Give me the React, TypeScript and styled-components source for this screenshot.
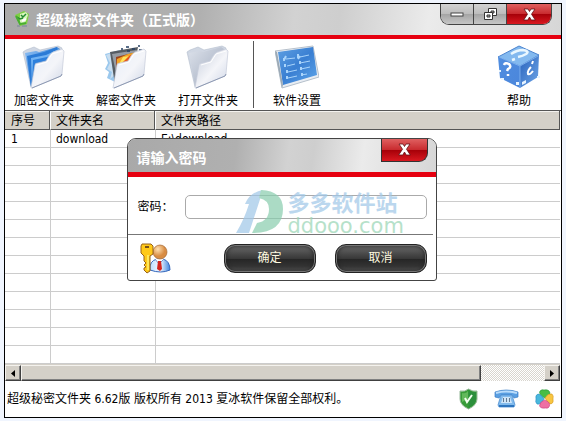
import React, { useState } from 'react';
import styled, { createGlobalStyle, css } from 'styled-components';

const Global = createGlobalStyle`
  * { box-sizing: border-box; }
  html, body { margin: 0; padding: 0; background: #f0f5fe; }
  body, button, input {
    font-family: "DejaVu Sans Condensed", "Noto Sans CJK SC", sans-serif;
    font-size: 12px;
    line-height: 16px;
    color: #000;
  }
  button { padding: 0; margin: 0; border: 0; background: none; }
`;

const Desktop = styled.div`
  display: flex;
  min-height: 100vh;
  padding: 3px 4px;
`;

const Window = styled.main`
  position: relative;
  flex: 1;
  min-width: 0;
  display: flex;
  flex-direction: column;
  border: 1px solid #000;
  background: #fff;
`;

const silver = css`
  background: linear-gradient(97deg, #a9a9a9 0%, #b0b0b0 35%, #d2d2d2 52%, #cecece 60%, #ebebeb 76%, #d6d6d6 100%);
`;

const TitleBar = styled.header`
  ${silver}
  display: flex;
  align-items: flex-start;
  height: 35px;
  padding: 0 9px 0 10px;
  border-bottom: 4px solid #e60010;
`;

const Title = styled.h1`
  flex: 1;
  margin: 0;
  padding: 6px 0 0 6px;
  font-size: 14px;
  line-height: 20px;
  font-weight: 700;
  color: #fff;
  white-space: nowrap;
`;

const AppMark = styled.svg`
  width: 15px;
  height: 16px;
  margin-top: 7px;
`;

const Controls = styled.div`
  display: flex;
  height: 21px;
  border: 1px solid #444;
  border-top: 0;
  border-radius: 0 0 9px 9px;
  overflow: hidden;
`;

const ControlButton = styled.button<{ $close?: boolean }>`
  display: flex;
  align-items: center;
  justify-content: center;
  width: ${(p) => (p.$close ? 44 : 33)}px;
  border-right: ${(p) => (p.$close ? '0' : '1px solid #444')};
  background: ${(p) =>
    p.$close
      ? 'linear-gradient(#df6060 0, #c92c30 48%, #a50008 50%, #d91820 100%)'
      : 'linear-gradient(#d2d2d2 0, #bdbdbd 48%, #a4a4a4 50%, #c6c6c6 100%)'};
`;

const Toolbar = styled.nav`
  display: flex;
  height: 72px;
  padding: 2px 28px 0 8px;
  border-bottom: 1px solid #555;
`;

const Tool = styled.button`
  display: flex;
  flex-direction: column;
  align-items: center;
  width: 62px;
  margin-right: 20px;
  padding-top: 4px;
  white-space: nowrap;

  svg { width: 44px; height: 44px; }
  span { margin-top: 4px; }
`;

const HelpTool = styled(Tool)`
  width: 48px;
  margin: 0 -10px 0 auto;
`;

const Divider = styled.div`
  width: 1px;
  height: 67px;
  margin: 0 12px 0 -6px;
  background: #555;
`;

const ListArea = styled.section`
  flex: 1 0 234px;
  overflow: hidden;
  padding-right: 1px;
`;

const FileTable = styled.table`
  width: 100%;
  table-layout: fixed;
  border-collapse: separate;
  border-spacing: 0;

  th {
    height: 19px;
    padding: 2px 5px 0;
    text-align: left;
    font-weight: 400;
    background: #d4d0c8;
    border-bottom: 1px solid #555;
    border-right: 1px solid #fff;
    box-shadow: inset -1px 0 #555, inset 0 1px #f4f2ee;
  }
  td {
    height: 18px;
    padding: 1px 5px 0;
    line-height: 16px;
    border-bottom: 1px solid #ccc;
    border-right: 1px solid #ccc;
  }
  th:last-child, td:last-child { border-right: 0; }
  th:first-child, td:first-child { padding-left: 6px; }
`;

const ScrollBar = styled.div`
  display: flex;
  height: 17px;
  margin-right: 1px;
  border-top: 1px solid #d4d0c8;
  background: repeating-conic-gradient(#d8d5ce 0 25%, #fff 0 50%) 0 0 / 2px 2px;
`;

const raised = css`
  background: #d4d0c8;
  border: 1px solid;
  border-color: #f4f2ee #404040 #404040 #f4f2ee;
  box-shadow: inset -1px -1px #808080;
`;

const ScrollButton = styled.button`
  ${raised}
  display: flex;
  align-items: center;
  justify-content: center;
  width: 16px;
`;

const ScrollTrack = styled.div`
  flex: 1;
  display: flex;
`;

const ScrollThumb = styled.div`
  ${raised}
  width: 88%;
`;

const StatusBar = styled.footer`
  display: flex;
  align-items: center;
  justify-content: space-between;
  height: 36px;
  padding: 0 7px 0 2px;
  white-space: nowrap;
`;

const StatusIcons = styled.div`
  display: flex;
  align-items: center;
  gap: 16px;
  svg { display: block; }
`;

const Overlay = styled.div`
  position: absolute;
  inset: 0 3px 3px 0;
  display: flex;
  align-items: center;
  justify-content: center;
`;

const Dialog = styled.form`
  position: relative;
  width: 310px;
  border: 1px solid #444;
  border-radius: 9px 9px 3px 3px;
  background: #fff;
  overflow: hidden;
`;

const DialogHeader = styled.header`
  ${silver}
  display: flex;
  height: 38px;
  padding: 0 8px 0 9px;
  border-bottom: 5px solid #e60010;
`;

const DialogTitle = styled.h2`
  flex: 1;
  margin: 0;
  padding-top: 9px;
  font-size: 14px;
  line-height: 20px;
  font-weight: 700;
  color: #fff;
`;

const DialogClose = styled(ControlButton)`
  width: 47px;
  height: 23px;
  border: 1px solid #333;
  border-top: 0;
  border-radius: 0 0 9px 0;
`;

const Field = styled.div`
  display: flex;
  align-items: center;
  height: 58px;
  margin: 0 3px 0 0;
  padding: 3px 6px 0 10px;
  border-bottom: 1px solid #777;

  label { width: 47px; white-space: nowrap; }
`;

const PasswordInput = styled.input`
  flex: 1;
  min-width: 0;
  height: 24px;
  padding: 0 6px;
  border: 1px solid #aaa;
  border-radius: 5px;
  background: #fff;
  outline: none;
`;

const Actions = styled.div`
  display: flex;
  align-items: center;
  height: 45px;
  padding: 2px 9px 0 12px;
  gap: 19px;

  svg { margin-right: auto; }
`;

const PillButton = styled.button`
  width: 92px;
  height: 29px;
  border: 1px solid #222;
  border-radius: 11px;
  color: #fffbe0;
  background: linear-gradient(#707070 0, #4c4c4c 30%, #383838 50%, #262626 53%, #333 78%, #5a5a5a 100%);
  box-shadow: inset 0 0 0 1px #777, inset 0 0 4px 1px #222;
`;

const Watermark = styled.div`
  position: absolute;
  left: 108px;
  top: 50px;
  display: flex;
  gap: 4px;
  opacity: 0.72;
  pointer-events: none;
  white-space: nowrap;
`;

const WatermarkText = styled.div`
  display: flex;
  flex-direction: column;

  strong {
    font: 700 22px/24px "Noto Sans CJK SC", sans-serif;
    color: #a2c8e8;
  }
  span {
    font: 21px/24px "DejaVu Sans", sans-serif;
    margin-top: 1px;
    color: #9bd6b6;
  }
`;

const CloseGlyph = () => (
  <svg width="13" height="13" viewBox="0 0 13 13">
    <path d="M1 1h4l1.500 2.500L8 1h4L8.500 6.200 12.300 12H8.200L6.500 9 4.800 12H.7l3.800-5.800z" fill="#fff" stroke="#641014" strokeWidth=".8" />
  </svg>
);

const AppIcon = () => (
  <AppMark viewBox="0 0 15 16" aria-hidden="true">
    <path d="M0 4 9 0l5 3-2 10-7 2z" fill="#7ed044" />
    <path d="m5 3 6-2 2 3-3 8-5 1z" fill="#d9f6bd" />
    <path d="m6 4 2 2 3-3M2 6l3 2 3-1" stroke="#238b31" strokeWidth="1.500" fill="none" />
    <path d="m1 5 4 8 6-1" stroke="#49ae31" strokeWidth="2" fill="none" />
    <path d="M2 15h3m2 0h5" stroke="#789" />
    <path d="m7 10 4-2" stroke="#fff" strokeWidth="2" />
  </AppMark>
);

const Folder = ({ kind }: { kind: 'blue' | 'photo' | 'gray' }) => {
  const id = `folder-${kind}`;
  const blue = kind === 'blue';
  return (
    <svg viewBox="0 0 44 44" aria-hidden="true">
      <defs>
        <linearGradient id={`${id}-front`} x1="0" y1="0" x2="1" y2="1">
          <stop offset="0" stopColor={kind === 'gray' ? '#c3cbda' : '#e6edf9'} />
          <stop offset=".55" stopColor="#f4f5f9" />
          <stop offset="1" stopColor="#ccd4e5" />
        </linearGradient>
        <linearGradient id={`${id}-back`} x1="0" y1="0" x2="1" y2="1">
          <stop offset="0" stopColor={blue ? '#8dc0f5' : '#dde2eb'} />
          <stop offset="1" stopColor={blue ? '#1765c3' : '#9ba6ba'} />
        </linearGradient>
      </defs>
      {kind !== 'photo' && (
        <>
          <path d="M1 7 4 5l8-3 6 3 18-4 4 2-1 9-30 30z" fill="#d0d7e3" stroke="#b4bdcd" strokeWidth=".6" />
          <path d="m3 8 11-2 3 1 18-5 3 2v10L9 42z" fill={`url(#${id}-back)`} />
        </>
      )}
      {blue && (
        <>
          <path d="m5 11 17-4 13-5 2 10-25 8-3 22z" fill="#2b7bd6" />
          <path d="m9 13 15-3 13-6v8L13 20l-3 22z" fill="#72b3f3" />
          <path d="m11 15 14-3 12-6v7l-24 8-3 20z" fill="#2e80dc" />
        </>
      )}
      {kind === 'photo' && (
        <>
          <path d="m1 9 15-4 3 6-6 27-10-5 2-6-4-3 3-6z" fill="#9bc8ed" />
          <path d="m2 10 14-5-4 24-6 5 2-7-5-3 3-6z" fill="#c9def0" />
          <path d="M6 7 34 2l-3 16-20 22z" fill="#555c63" />
          <path d="m8 9 25-4-2 10-18 18z" fill="#969ca4" />
          <path d="m12 12 25-6-3 12-21 20z" fill="#9d431c" />
          <path d="m13 14 11-5 13-3-7 9-17 21z" fill="#f3a526" />
          <path d="m15 19 4-7 7-1-8 10-1 1-2 10z" fill="#ffe25a" />
          <path d="m18 18 7-7 7-3-4 6-7 5z" fill="#e65419" />
          <path d="M17 4h2m3-2h3m3 2h3m3-3h2m-13 5h3m9-1h3" stroke="#243f63" strokeWidth="1.500" />
        </>
      )}
      <path d="M13 20q0-2 3-2l8-2 3-5q2-3 4-4l9-3 2 2-2 23-1 2L10 43H9z" fill={`url(#${id}-front)`} stroke="#c5ccda" strokeWidth=".7" />
      <path d="m10 43 29-12 1-2" fill="none" stroke="#8c98b2" strokeWidth="1" />
      <path d="m15 20 10-3 5-8 10-3" fill="none" stroke="#fff" strokeWidth="1" />
    </svg>
  );
};

const SettingsIcon = () => (
  <svg viewBox="0 0 44 44" aria-hidden="true">
    <defs>
      <linearGradient id="board" x1="0" y1="0" x2="1" y2="1">
        <stop stopColor="#5e9fe2" /><stop offset=".5" stopColor="#3a7fd2" /><stop offset="1" stopColor="#5ea6ea" />
      </linearGradient>
    </defs>
    <path d="m0 6 38-5 6 31-37 11z" fill="#e8edf3" stroke="#b6c0cb" />
    <path d="m3 7 35-5 4 28-34 10z" fill="url(#board)" />
    <path d="m0 6 7 37 1-3L2 7z" fill="#9ba9b5" />
    <g stroke="#a9d4fb" strokeWidth="1">
      <path d="m11 14 9-1m5-1 9-2M12 21l8-2m5-1 10-2M13 27l9-2m4-1 9-2M13 33l9-2m4-1 6-1" />
      <path d="M9 13v3m2-5-2 4m14-6v4m2-2-2 3M10 19v3m15-6v3M12 25v3m14-6v3M12 31v3m15-6v3" strokeWidth="2" />
    </g>
  </svg>
);

const HelpIcon = () => (
  <svg viewBox="0 0 44 44" aria-hidden="true">
    <defs>
      <linearGradient id="cubeLeft" x1="0" y1="0" x2="1" y2="1"><stop stopColor="#4f8de0" /><stop offset="1" stopColor="#4b86db" /></linearGradient>
      <linearGradient id="cubeRight" x1="0" y1="0" x2="1" y2="1"><stop stopColor="#2861bb" /><stop offset="1" stopColor="#70a8e9" /></linearGradient>
    </defs>
    <path d="m1 12 21-11 20 9-19 11z" fill="#83b9ef" stroke="#4c84cf" />
    <path d="m1 12 22 9v22L3 33z" fill="url(#cubeLeft)" />
    <path d="m23 21 19-11-1 22-18 11z" fill="url(#cubeRight)" />
    <path d="m2 12 21 9 18-10M23 21v22" fill="none" stroke="#8dbdf5" strokeWidth=".7" />
    <path d="M14 9q6-4 12-4 7 1 3 4-3 2-8 3m-3 2-3 1" fill="none" stroke="#e9f7ff" strokeWidth="2.500" />
    <path d="M7 20q1-3 5-1 3 3-1 5l-1 2m1 3v2" fill="none" stroke="#fff" strokeWidth="2.500" />
    <path d="m36 16-1 3m-1 3q-4 4-3 7 2 1 5-3" fill="none" stroke="#fff" strokeWidth="2" />
    <g fill="#e7f4ff"><path d="M2 25h2v2H2zm2 8h3v2H4zm15 4h3v3h-3zm6 0 4-2v3l-4 2zM40 31h3v2h-3z" /></g>
  </svg>
);

const KeyUserIcon = () => (
  <svg width="31" height="31" viewBox="0 0 31 31" aria-hidden="true">
    <defs>
      <radialGradient id="skin" cx=".35" cy=".3"><stop stopColor="#ffe1b2" /><stop offset="1" stopColor="#d88c43" /></radialGradient>
      <linearGradient id="coat"><stop stopColor="#b9dcff" /><stop offset=".5" stopColor="#f4faff" /><stop offset="1" stopColor="#3f85df" /></linearGradient>
    </defs>
    <path d="M10 27q-1-9 7-11h6q7 2 7 11-9 4-20 0z" fill="url(#coat)" stroke="#3567bc" />
    <path d="m15 16 4 5 5-5" fill="#fff" stroke="#7294cd" />
    <path d="m18 18 3 0 1 8-2 2-3-2z" fill="#d32620" />
    <circle cx="20" cy="9" r="7" fill="url(#skin)" stroke="#a66a35" strokeWidth=".7" />
    <path d="M2 1h9l2 2v8l-3 2v15l-3 2-3-3v-2l2-1-2-2 2-2-2-2v-5l-3-3V3z" fill="#ffc919" stroke="#986318" />
    <path d="M5 4h4" stroke="#765018" strokeWidth="2" />
    <path d="M8 12v15" stroke="#fff071" strokeWidth="1.500" />
  </svg>
);

const ShieldIcon = () => (
  <svg width="19" height="22" viewBox="0 0 19 22" aria-hidden="true">
    <path d="M9.500 1Q14 4 18 3v8q0 6-8.500 10Q1 17 1 11V3q5 1 8.500-2z" fill="#379c38" stroke="#97b99a" />
    <path d="M9.500 2Q13 5 17 4v7q0 5-7.500 9z" fill="#2c8f3c" />
    <path d="M3 5q4 1 6-2v8L3 14z" fill="#62b95c" />
    <path d="m6 10 2 4 5-7" fill="none" stroke="#f4fff0" strokeWidth="2" />
  </svg>
);

const PhoneIcon = () => (
  <svg width="25" height="20" viewBox="0 0 25 20" aria-hidden="true">
    <path d="M1 3q11-4 23 0v5l-4 1-2-3H7L5 9 1 8z" fill="#5a9fe2" stroke="#3a7cc6" strokeWidth=".7" />
    <path d="M2 4q10-3 21 0" fill="none" stroke="#b9dcfb" strokeWidth="2" />
    <path d="M7 6h11l3 10-1 2H5l-1-2z" fill="#82bbed" stroke="#4f90d2" strokeWidth=".8" />
    <path d="M9 8h7l2 6H7z" fill="#cfe5f8" />
    <path d="M9 10h1m2 0h1m2 0h1M9 12h1m2 0h1m2 0h1" stroke="#40566e" strokeWidth="1.500" />
    <path d="M5 17h15" stroke="#2d75bf" strokeWidth="2" />
  </svg>
);

const CloverIcon = () => (
  <svg width="19" height="20" viewBox="0 0 19 20" aria-hidden="true">
    <path d="M9.500 9Q3 5 5 2q2-2 4-1 5-1 6 3 0 3-5.500 5z" fill="#48bd45" stroke="#239534" strokeWidth=".6" />
    <path d="M9 10Q6 16 2 15q-2-2-1-5-1-4 2-5 3 0 6 5z" fill="#49b8dd" stroke="#278cc0" strokeWidth=".6" />
    <path d="M10 9q3-5 7-4 2 2 1 5 1 4-2 5-3 0-6-6z" fill="#f8c641" stroke="#d49720" strokeWidth=".6" />
    <path d="M9.500 11q6 2 5 6-1 3-4 2-5 1-6-2 0-4 5-6z" fill="#ee70a3" stroke="#cb3f7e" strokeWidth=".6" />
  </svg>
);

const LogoMark = () => (
  <svg width="48" height="46" viewBox="0 0 48 46" aria-hidden="true">
    <path d="M27 1 13 44H0q8-13 13-29H9Q14 3 27 1z" fill="#a2c8e8" />
    <path d="M25 1q22 1 22 19 0 24-31 24l5-10q12-2 12-14 0-9-10-11z" fill="#8bceb0" />
  </svg>
);

const rows = [{ id: '1', name: 'download', path: 'E:\\download' }, ...Array.from({ length: 12 }, () => ({ id: '', name: '', path: '' }))];

export default function App() {
  const [password, setPassword] = useState('');
  return (
    <>
      <Global />
      <Desktop>
        <Window>
          <TitleBar>
            <AppIcon />
            <Title>超级秘密文件夹（正式版）</Title>
            <Controls>
              <ControlButton aria-label="最小化">
                <svg width="15" height="7" viewBox="0 0 15 7"><rect x="1" y="2" width="12" height="3" fill="#fff" stroke="#444" /></svg>
              </ControlButton>
              <ControlButton aria-label="还原">
                <svg width="15" height="15" viewBox="0 0 15 15">
                  <path d="M5.500 1.500h8v7h-8z" fill="#fff" stroke="#333" /><path d="M8 4h3v2H8z" fill="#aaa" stroke="#333" />
                  <path d="M1.500 5.500h8v7h-8z" fill="#fff" stroke="#333" /><path d="M4 8h3v2H4z" fill="#aaa" stroke="#333" />
                </svg>
              </ControlButton>
              <ControlButton $close aria-label="关闭"><CloseGlyph /></ControlButton>
            </Controls>
          </TitleBar>

          <Toolbar>
            <Tool><Folder kind="blue" /><span>加密文件夹</span></Tool>
            <Tool><Folder kind="photo" /><span>解密文件夹</span></Tool>
            <Tool><Folder kind="gray" /><span>打开文件夹</span></Tool>
            <Divider />
            <Tool><SettingsIcon /><span>软件设置</span></Tool>
            <HelpTool><HelpIcon /><span>帮助</span></HelpTool>
          </Toolbar>

          <ListArea>
            <FileTable>
              <colgroup><col width="46" /><col width="105" /><col /></colgroup>
              <thead><tr><th>序号</th><th>文件夹名</th><th>文件夹路径</th></tr></thead>
              <tbody>
                {rows.map((row, i) => (
                  <tr key={i}><td>{row.id}</td><td>{row.name}</td><td>{row.path}</td></tr>
                ))}
              </tbody>
            </FileTable>
          </ListArea>

          <ScrollBar>
            <ScrollButton aria-label="向左滚动"><svg width="4" height="7"><path d="M4 0v7L0 3.500z" /></svg></ScrollButton>
            <ScrollTrack><ScrollThumb /></ScrollTrack>
            <ScrollButton aria-label="向右滚动"><svg width="4" height="7"><path d="M0 0v7l4-3.500z" /></svg></ScrollButton>
          </ScrollBar>

          <StatusBar>
            <span>超级秘密文件夹 6.62版 版权所有 2013 夏冰软件保留全部权利。</span>
            <StatusIcons><ShieldIcon /><PhoneIcon /><CloverIcon /></StatusIcons>
          </StatusBar>

          <Overlay>
            <Dialog role="dialog" aria-labelledby="dialog-title" onSubmit={(e) => e.preventDefault()}>
              <DialogHeader>
                <DialogTitle id="dialog-title">请输入密码</DialogTitle>
                <DialogClose $close type="button" aria-label="关闭"><CloseGlyph /></DialogClose>
              </DialogHeader>
              <Field>
                <label htmlFor="password">密码：</label>
                <PasswordInput id="password" type="password" value={password} onChange={(e) => setPassword(e.target.value)} />
              </Field>
              <Actions>
                <KeyUserIcon />
                <PillButton type="submit">确定</PillButton>
                <PillButton type="button">取消</PillButton>
              </Actions>
              <Watermark>
                <LogoMark />
                <WatermarkText><strong>多多软件站</strong><span>ddooo.com</span></WatermarkText>
              </Watermark>
            </Dialog>
          </Overlay>
        </Window>
      </Desktop>
    </>
  );
}
